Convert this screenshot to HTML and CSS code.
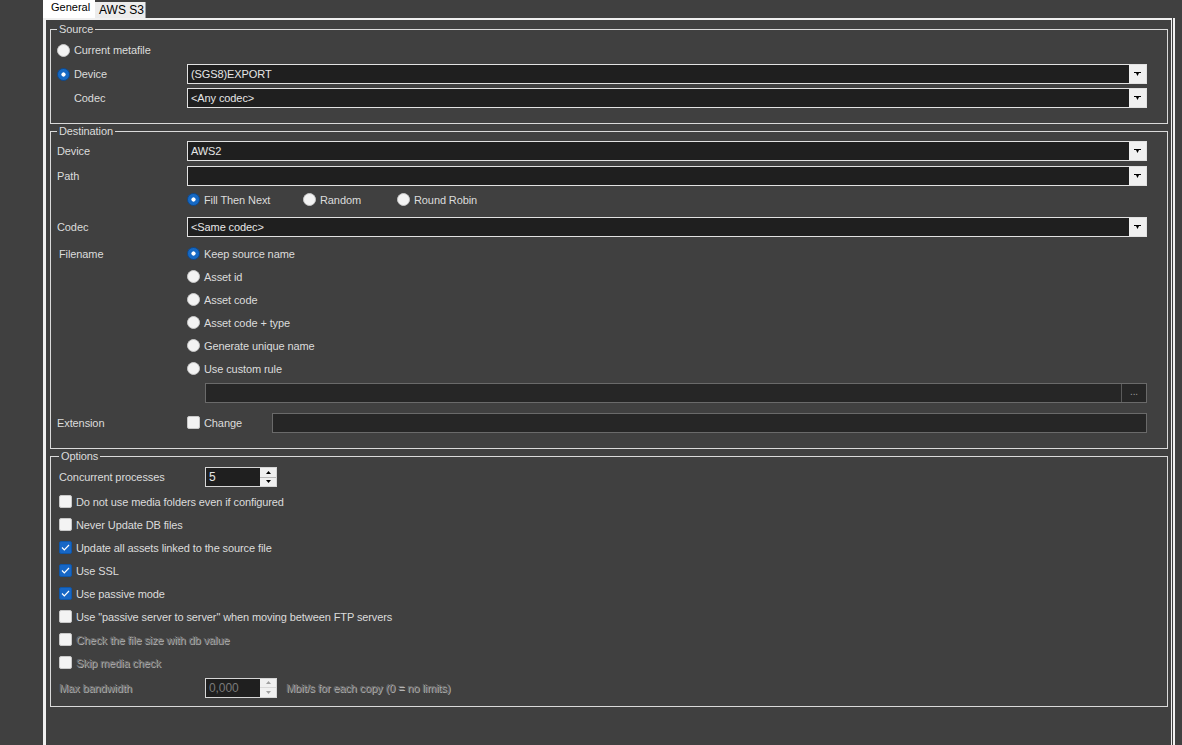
FILE: index.html
```html
<html>
<head>
	<title>Transfer settings</title>
	<link rel="stylesheet" href="styles.css">
</head>
<body>
	<div class="window">
		<div class="gutter"></div>
		<div class="main">
			<div class="tabs">
				<div class="tab tab-active">General</div>
				<div class="tab">AWS S3</div>
			</div>
			<div class="page">

				<fieldset class="group group-source">
					<legend>Source</legend>
					<div class="row h24">
						<span class="radio"></span><span>Current metafile</span>
					</div>
					<div class="row h24">
						<div class="lab"><span class="radio on"></span><span>Device</span></div>
						<div class="combo"><span class="combo-text">(SGS8)EXPORT</span><span class="combo-btn"><svg width="7" height="4" viewBox="0 0 7 4"><polygon points="0,0 7,0 7,1 5,1 3.5,4 2,1 0,1" fill="#000"/></svg></span></div>
					</div>
					<div class="row h24">
						<div class="lab lab-indent">Codec</div>
						<div class="combo"><span class="combo-text">&lt;Any codec&gt;</span><span class="combo-btn"><svg width="7" height="4" viewBox="0 0 7 4"><polygon points="0,0 7,0 7,1 5,1 3.5,4 2,1 0,1" fill="#000"/></svg></span></div>
					</div>
				</fieldset>

				<fieldset class="group group-dest">
					<legend>Destination</legend>
					<div class="row h25">
						<div class="lab">Device</div>
						<div class="combo"><span class="combo-text">AWS2</span><span class="combo-btn"><svg width="7" height="4" viewBox="0 0 7 4"><polygon points="0,0 7,0 7,1 5,1 3.5,4 2,1 0,1" fill="#000"/></svg></span></div>
					</div>
					<div class="row h25">
						<div class="lab">Path</div>
						<div class="combo"><span class="combo-text"></span><span class="combo-btn"><svg width="7" height="4" viewBox="0 0 7 4"><polygon points="0,0 7,0 7,1 5,1 3.5,4 2,1 0,1" fill="#000"/></svg></span></div>
					</div>
					<div class="row h23">
						<div class="lab"></div>
						<div class="opt opt-fill"><span class="radio on"></span><span>Fill Then Next</span></div>
						<div class="opt opt-random"><span class="radio"></span><span>Random</span></div>
						<div class="opt"><span class="radio"></span><span>Round Robin</span></div>
					</div>
					<div class="row h31">
						<div class="lab">Codec</div>
						<div class="combo"><span class="combo-text">&lt;Same codec&gt;</span><span class="combo-btn"><svg width="7" height="4" viewBox="0 0 7 4"><polygon points="0,0 7,0 7,1 5,1 3.5,4 2,1 0,1" fill="#000"/></svg></span></div>
					</div>
					<div class="row h23">
						<div class="lab lab-file">Filename</div>
						<div class="opt"><span class="radio on"></span><span>Keep source name</span></div>
					</div>
					<div class="row h23">
						<div class="lab"></div>
						<div class="opt"><span class="radio"></span><span>Asset id</span></div>
					</div>
					<div class="row h23">
						<div class="lab"></div>
						<div class="opt"><span class="radio"></span><span>Asset code</span></div>
					</div>
					<div class="row h23">
						<div class="lab"></div>
						<div class="opt"><span class="radio"></span><span>Asset code + type</span></div>
					</div>
					<div class="row h23">
						<div class="lab"></div>
						<div class="opt"><span class="radio"></span><span>Generate unique name</span></div>
					</div>
					<div class="row h23">
						<div class="lab"></div>
						<div class="opt"><span class="radio"></span><span>Use custom rule</span></div>
					</div>
					<div class="row h26">
						<div class="lab lab-wide"></div>
						<div class="textbox"><span class="textbox-fill"></span><span class="browse">...</span></div>
					</div>
					<div class="row h33">
						<div class="lab">Extension</div>
						<div class="opt opt-change"><span class="check"></span><span>Change</span></div>
						<div class="textbox"></div>
					</div>
				</fieldset>

				<fieldset class="group group-options">
					<legend>Options</legend>
					<div class="row h26">
						<div class="lab lab-opt">Concurrent processes</div>
						<div class="spin">
							<span class="spin-val">5</span>
							<span class="spin-btns">
								<span class="spin-half"><svg width="5" height="3" viewBox="0 0 5 3"><polygon points="2.5,0 5,3 0,3" fill="#000"/></svg></span>
								<span class="spin-half"><svg width="5" height="3" viewBox="0 0 5 3"><polygon points="0,0 5,0 2.5,3" fill="#000"/></svg></span>
							</span>
						</div>
					</div>
					<div class="row h23"><span class="check"></span><span>Do not use media folders even if configured</span></div>
					<div class="row h23"><span class="check"></span><span>Never Update DB files</span></div>
					<div class="row h23"><span class="check on"><svg width="9" height="7" viewBox="0 0 9 7"><polyline points="1,3.5 3.3,5.8 8,1" fill="none" stroke="#fff" stroke-width="1.2"/></svg></span><span>Update all assets linked to the source file</span></div>
					<div class="row h23"><span class="check on"><svg width="9" height="7" viewBox="0 0 9 7"><polyline points="1,3.5 3.3,5.8 8,1" fill="none" stroke="#fff" stroke-width="1.2"/></svg></span><span>Use SSL</span></div>
					<div class="row h23"><span class="check on"><svg width="9" height="7" viewBox="0 0 9 7"><polyline points="1,3.5 3.3,5.8 8,1" fill="none" stroke="#fff" stroke-width="1.2"/></svg></span><span>Use passive mode</span></div>
					<div class="row h23"><span class="check"></span><span>Use "passive server to server" when moving between FTP servers</span></div>
					<div class="row h23"><span class="check"></span><span class="disabled">Check the file size with db value</span></div>
					<div class="row h23"><span class="check"></span><span class="disabled">Skip media check</span></div>
					<div class="row h27">
						<div class="lab lab-opt disabled">Max bandwidth</div>
						<div class="spin spin-off">
							<span class="spin-val">0,000</span>
							<span class="spin-btns">
								<span class="spin-half"><svg width="5" height="3" viewBox="0 0 5 3"><polygon points="2.5,0 5,3 0,3" fill="#a0a0a0"/></svg></span>
								<span class="spin-half"><svg width="5" height="3" viewBox="0 0 5 3"><polygon points="0,0 5,0 2.5,3" fill="#a0a0a0"/></svg></span>
							</span>
						</div>
						<span class="unit disabled">Mbit/s for each copy (0 = no limits)</span>
					</div>
				</fieldset>

			</div>
		</div>
	</div>
</body>
</html>
```

FILE: styles.css
```css
* {
	box-sizing: border-box;
}
body {
	margin: 0;
	background: #404040;
	font-family: "Liberation Sans", Arial, sans-serif;
	font-size: 11px;
	letter-spacing: -0.1px;
	color: #dcdcdc;
	overflow: hidden;
}
.window {
	display: flex;
	height: 745px;
}
.gutter {
	width: 43px;
	flex: none;
}
.main {
	width: 1129px;
	flex: none;
	display: flex;
	flex-direction: column;
}

/* tabs */
.tabs {
	display: flex;
	align-items: flex-end;
	height: 18px;
	flex: none;
}
.tab {
	height: 16px;
	width: 51px;
	padding-left: 4px;
	line-height: 16px;
	font-size: 12px;
	letter-spacing: 0;
	color: #000;
	background: #ececec;
	border-right: 1px solid #9a9a9a;
}
.tab-active {
	height: 18px;
	width: 52px;
	padding-left: 8px;
	line-height: 15px;
	font-size: 11px;
	background: #fff;
	border-right: 0;
}

/* tab page */
.page {
	flex: 1;
	border-left: 3px solid #f0f0f0;
	border-top: 2px solid #f0f0f0;
	border-right: 1px solid #f0f0f0;
	box-shadow: 1px 0 0 #404040, 3px 0 0 #f0f0f0;
	padding: 3px 3px 0 4px;
}

/* group boxes */
.group {
	margin: 0;
	min-width: 0;
	border: 1px solid #dadada;
	padding: 0 20px 0 6px;
}
.group legend {
	padding: 0 2px;
	line-height: 13px;
	font-size: 11px;
}
.group-source {
	padding-top: 2px;
	padding-bottom: 13px;
}
.group-dest {
	margin-top: 1px;
	padding-bottom: 9px;
}
.group-options {
	margin-top: 1px;
	padding-top: 1px;
	padding-left: 8px;
	padding-bottom: 5px;
}

.row {
	display: flex;
	align-items: center;
	white-space: nowrap;
}
.h23 { height: 23px; }
.h24 { height: 24px; }
.h25 { height: 25px; }
.h26 { height: 26px; }
.h27 { height: 27px; }
.h31 { height: 31px; }
.h33 { height: 33px; }

.lab {
	width: 130px;
	flex: none;
	display: flex;
	align-items: center;
}
.lab-indent {
	padding-left: 17px;
}
.lab-file {
	padding-left: 2px;
}
.lab-wide {
	width: 148px;
}
.lab-opt {
	width: 146px;
}

/* combo boxes */
.combo {
	flex: 1;
	height: 20px;
	display: flex;
	border: 1px solid #e2e2e2;
	background: #1f1f1f;
}
.combo-text {
	flex: 1;
	padding-left: 3px;
	line-height: 18px;
	color: #e6e6e6;
}
.combo-btn {
	width: 17px;
	background: #f0f0f0;
	display: flex;
	align-items: center;
	justify-content: center;
}

/* radios & checkboxes */
.radio {
	width: 13px;
	height: 13px;
	flex: none;
	border-radius: 50%;
	background: #f3f3f3;
	border: 1px solid #c8c8c8;
	margin-right: 4px;
}
.radio.on {
	background: radial-gradient(circle, #fff 0 1.8px, #1669c4 2.4px);
	border-color: #0b4a93;
}
.check {
	width: 13px;
	height: 13px;
	flex: none;
	border-radius: 2px;
	background: #f3f3f3;
	border: 1px solid #c8c8c8;
	margin-right: 4px;
	display: flex;
	align-items: center;
	justify-content: center;
}
.check.on {
	background: #1767c6;
	border-color: #0f56a8;
}
.opt {
	display: flex;
	align-items: center;
}
.opt-fill {
	width: 116px;
}
.opt-random {
	width: 94px;
}
.opt-change {
	width: 85px;
	flex: none;
}

/* text boxes */
.textbox {
	flex: 1;
	height: 20px;
	display: flex;
	border: 1px solid #6a6a6a;
	background: #262626;
}
.textbox-fill {
	flex: 1;
}
.browse {
	width: 25px;
	border-left: 1px solid #5a5a5a;
	color: #9a9a9a;
	text-align: center;
	line-height: 16px;
	font-size: 10px;
}

/* spin boxes */
.spin {
	width: 72px;
	height: 20px;
	flex: none;
	display: flex;
	border: 1px solid #d6d6d6;
	background: #1f1f1f;
}
.spin-val {
	flex: 1;
	padding-left: 3px;
	line-height: 18px;
	font-size: 12px;
	color: #e6e6e6;
}
.spin-btns {
	width: 16px;
	display: flex;
	flex-direction: column;
	background: #f0f0f0;
}
.spin-half {
	flex: 1;
	display: flex;
	align-items: center;
	justify-content: center;
}
.spin-half + .spin-half {
	border-top: 1px solid #b8b8b8;
}
.spin-off .spin-val {
	color: #7a7a7a;
}
.spin-off .spin-half + .spin-half {
	border-top-color: #d8d8d8;
}
.unit {
	margin-left: 9px;
}
.disabled {
	color: #6e6e6e;
	text-shadow: 1px 1px 0 #b4b4b4;
}
```
